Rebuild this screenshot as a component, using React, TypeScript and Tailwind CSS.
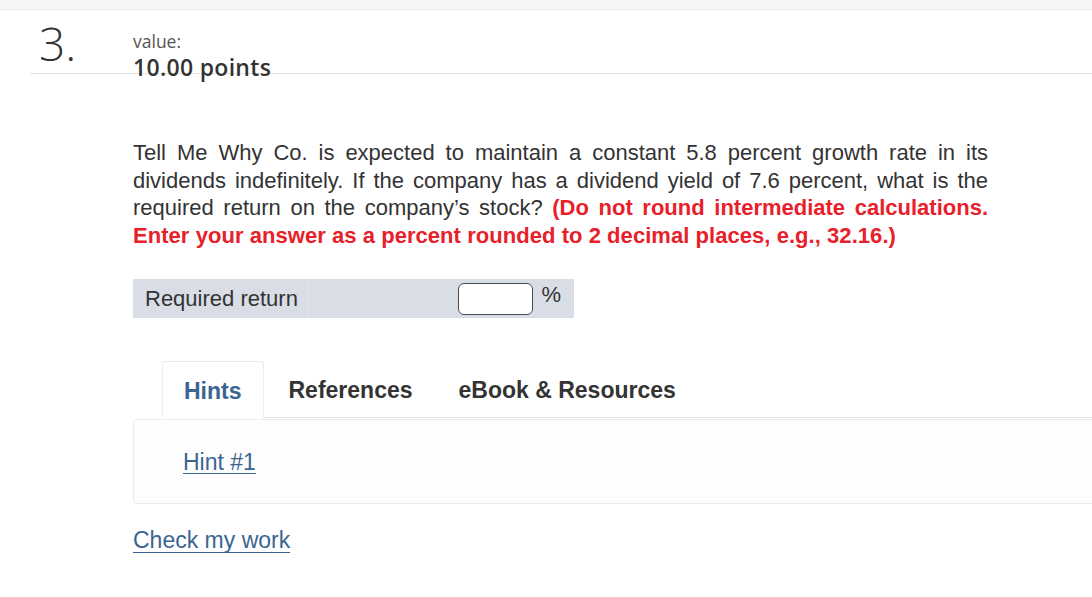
import React from "react";

const sans = { fontFamily: '"Liberation Sans", Arial, sans-serif' };

export default function App() {
  return (
    <div className="w-[1092px] h-[597px] bg-white overflow-hidden relative">
      {/* Top strip */}
      <div className="h-[10px] bg-[#f6f6f6] border-b border-[#e9e9e9]" />

      {/* Question header */}
      <div className="ml-[30px] h-[64px] border-b border-[#e4e4e4] flex">
        <div
          className="w-[103px] pl-[9px] pt-[10px] text-[46px] leading-[46px] font-light text-[#333]"
          style={{ fontFamily: '"Open Sans", Lato, sans-serif' }}
        >
          3.
        </div>
        <div
          className="pt-[20px] flex flex-col"
          style={{ fontFamily: '"Open Sans", Lato, sans-serif' }}
        >
          <span className="text-[17.5px] leading-[22px] text-[#555]">value:</span>
          <span className="text-[23px] leading-[28px] font-semibold text-[#333] mt-[1px] tracking-[0.3px]">
            10.00 points
          </span>
        </div>
      </div>

      <div className="ml-[133px] w-[855px]" style={sans}>
        {/* Question text */}
        <div className="mt-[65px] text-[22px] leading-[27.6px] text-[#333]">
          <div className="whitespace-nowrap text-justify [text-align-last:justify]">
            Tell Me Why Co. is expected to maintain a constant 5.8 percent growth rate in its
          </div>
          <div className="whitespace-nowrap text-justify [text-align-last:justify]">
            dividends indefinitely. If the company has a dividend yield of 7.6 percent, what is the
          </div>
          <div className="whitespace-nowrap text-justify [text-align-last:justify]">
            required return on the company’s stock?{" "}
            <span className="font-bold text-[#e8202a]">
              (Do not round intermediate calculations.
            </span>
          </div>
          <div className="whitespace-nowrap font-bold text-[#e8202a] tracking-[0.05px]">
            Enter your answer as a percent rounded to 2 decimal places, e.g., 32.16.)
          </div>
        </div>

        {/* Answer row */}
        <div className="mt-[30px] w-[441px] h-[39px] bg-[#d9dde5] flex items-center">
          <div className="w-[176px] h-full pl-[12px] flex items-center border-r border-[#e1e4ea] text-[22px] text-[#333]">
            Required return
          </div>
          <div className="flex-1 h-full flex items-center justify-end pr-[13px] gap-[10px]">
            <div className="w-[75px] h-[32px] bg-white border border-[#4b4b4b] rounded-[6px] translate-x-[2px]" />
            <span className="text-[22px] text-[#333] -mt-[8px]">%</span>
          </div>
        </div>
      </div>

      <div className="ml-[133px]" style={sans}>
        {/* Tabs */}
        <div className="mt-[43px] flex items-end border-b border-[#e6e6e6] ml-[29px] h-[57px] relative">
          <div className="h-[57px] px-[21px] pt-[2px] flex items-center bg-white border border-b-0 border-[#ececec] rounded-t-[3px] text-[23px] font-bold text-[#3b6591] -mb-px">
            Hints
          </div>
          <div className="h-[57px] px-[21px] pt-[2px] ml-[4px] flex items-center text-[23px] font-bold text-[#333]">
            References
          </div>
          <div className="h-[57px] px-[21px] pt-[2px] ml-[4px] flex items-center text-[23px] font-bold text-[#333]">
            eBook &amp; Resources
          </div>
        </div>

        {/* Panel */}
        <div className="mt-px h-[85px] border border-[#ececec] border-r-0 rounded-l-[4px] bg-[#fdfdfd] flex items-center pl-[49px]">
          <a className="text-[23px] leading-[28px] text-[#3b6591] underline underline-offset-[3px] decoration-1 cursor-pointer">
            Hint #1
          </a>
        </div>

        <div className="mt-[22px] leading-[28px]">
          <a className="text-[23px] leading-[28px] text-[#3b6591] underline underline-offset-[4px] decoration-1 cursor-pointer">
            Check my work
          </a>
        </div>
      </div>
    </div>
  );
}
